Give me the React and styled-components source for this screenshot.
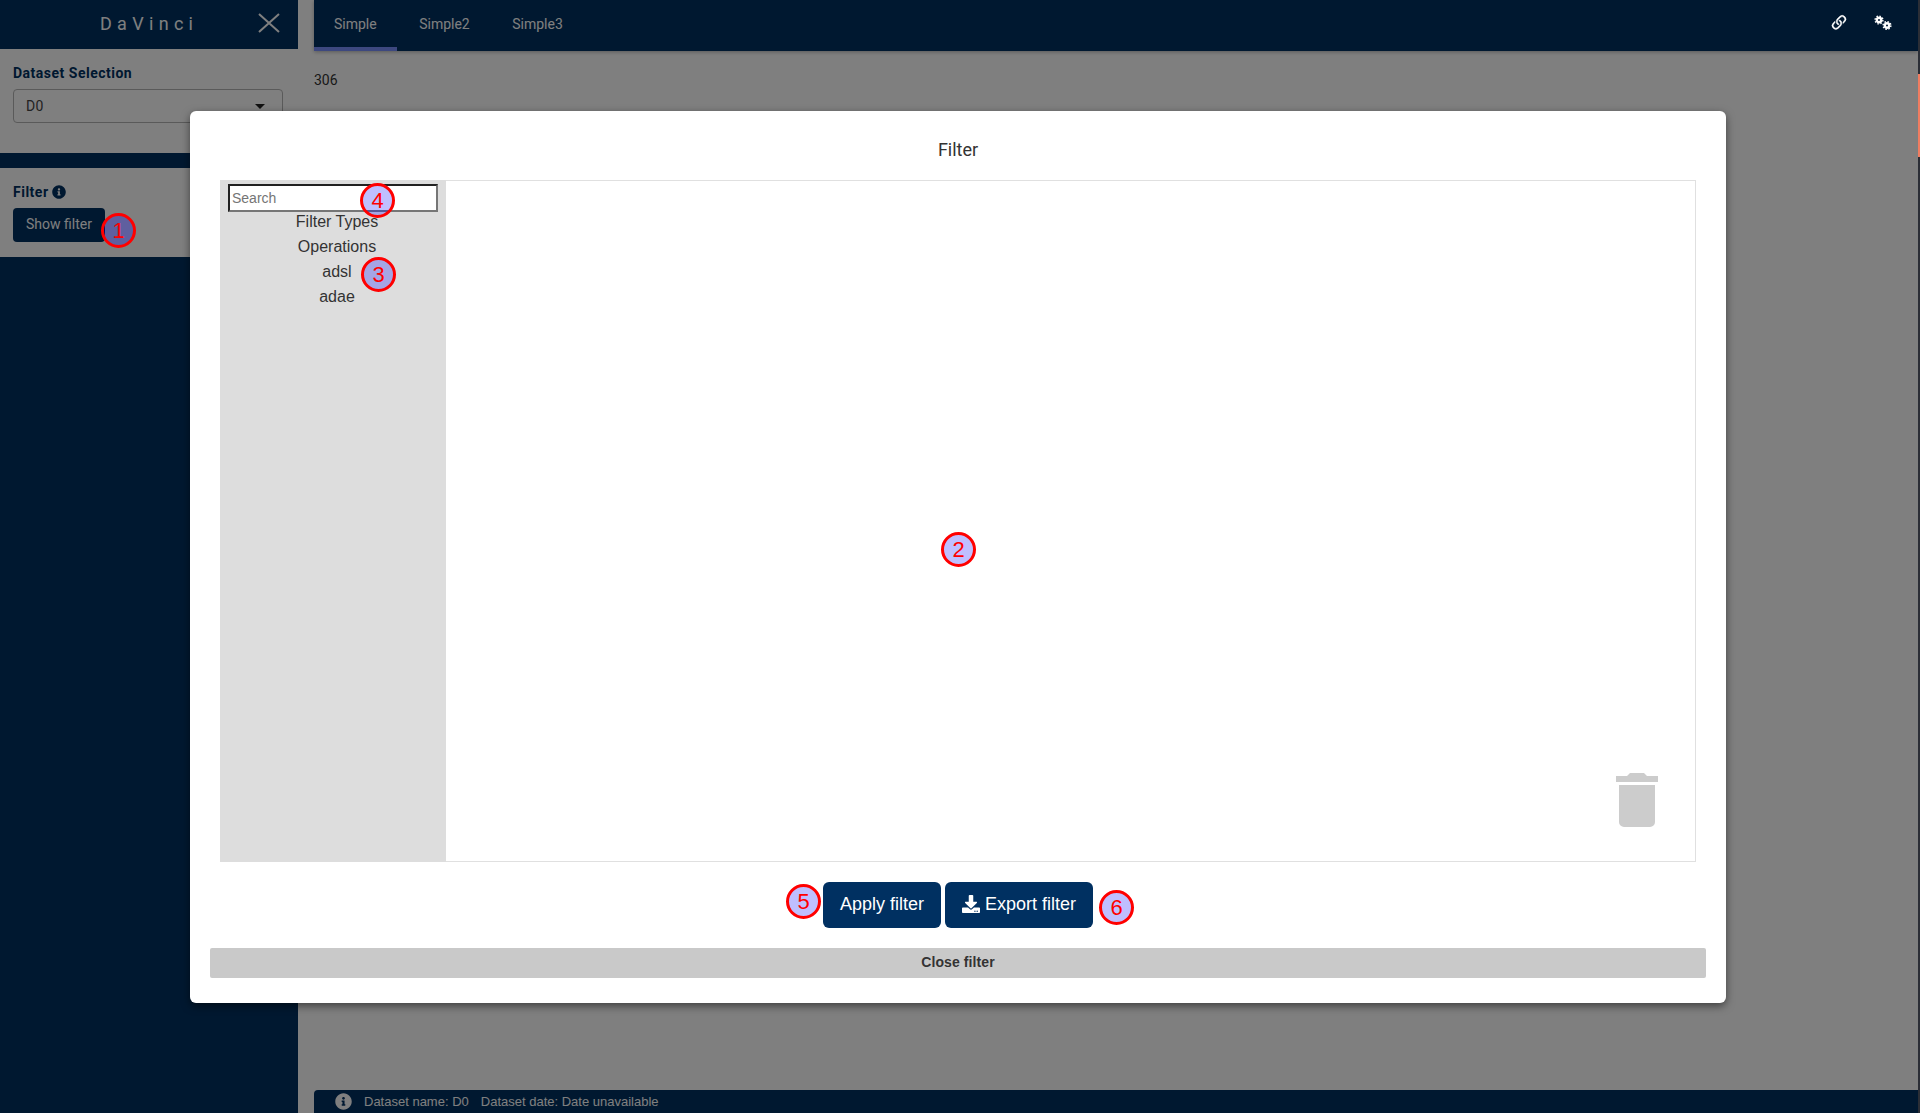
import React from "react";
import styled, { createGlobalStyle } from "styled-components";
import { FaDownload, FaInfoCircle } from "react-icons/fa";
import { BsLink45Deg } from "react-icons/bs";

const GlobalStyle = createGlobalStyle`
  html, body {
    margin: 0;
    padding: 0;
    height: 100%;
    overflow: hidden;
    background: #2b2e36;
    font-family: Roboto, "Liberation Sans", sans-serif;
  }
  * {
    box-sizing: border-box;
  }
`;

const Page = styled.div`
  display: flex;
  width: 1920px;
  height: 1113px;
`;

const Shell = styled.div`
  position: relative;
  display: flex;
  width: 1918px;
  height: 100%;
  background: #fff;
  overflow: hidden;
`;

const ScrollTrack = styled.div`
  width: 2px;
  height: 100%;
  padding-top: 74px;
  background: #2b2e36;
`;

const ScrollThumb = styled.div`
  height: 83px;
  background: #f07c60;
`;

const Sidebar = styled.aside`
  display: flex;
  flex-direction: column;
  width: 298px;
  background: #003061;
`;

const Brand = styled.div`
  display: flex;
  align-items: center;
  height: 49px;
  padding: 0 18px 3px 100px;
  justify-content: space-between;
  color: #fff;
  font-size: 18px;
  font-weight: 400;
  letter-spacing: 5.3px;
`;

const SideSection = styled.section`
  height: ${(props) => props.$height}px;
  margin-bottom: 15px;
  padding: ${(props) => props.$top}px 15px 0 13px;
  background: #fff;
`;

const SideLabel = styled.div`
  display: flex;
  align-items: center;
  gap: 3px;
  height: 16px;
  color: #003061;
  font-size: 14px;
  font-weight: 700;
  letter-spacing: 0.5px;

  svg {
    width: 14px;
    height: 14px;
  }
`;

const SelectBox = styled.div`
  display: flex;
  align-items: center;
  justify-content: space-between;
  height: 34px;
  margin-top: 8px;
  padding: 0 17px 0 12px;
  border: 1px solid #b5b5b5;
  border-radius: 4px;
  color: #444;
  font-size: 14px;
  letter-spacing: 0.4px;
`;

const Caret = styled.span`
  border-left: 5px solid transparent;
  border-right: 5px solid transparent;
  border-top: 5px solid #222;
`;

const SideButton = styled.div`
  display: flex;
  align-items: center;
  justify-content: center;
  width: 92px;
  height: 34px;
  margin-top: 8px;
  padding-bottom: 2px;
  border-radius: 4px;
  background: #003061;
  color: #fff;
  font-size: 14px;
`;

const Main = styled.main`
  position: relative;
  flex: 1;
  display: flex;
  flex-direction: column;
  padding-left: 16px;
`;

const TabBar = styled.nav`
  display: flex;
  align-items: stretch;
  gap: 2.5px;
  height: 51px;
  background: #003061;
  box-shadow: 0 1px 4px rgba(0, 0, 0, 0.3);
`;

const Tab = styled.div`
  display: flex;
  align-items: center;
  padding: 1px 20px 0;
  height: 51px;
  color: #fff;
  font-size: 14px;
  border-bottom: 4px solid ${(props) => (props.$active ? "#7a90ff" : "transparent")};
`;

// these two stay lit above the dimming overlay
const TabIcons = styled.div`
  position: relative;
  z-index: 2;
  display: flex;
  align-items: center;
  gap: 25px;
  margin-left: auto;
  padding: 0 26px 6px 0;
  color: #fff;

  svg path {
    stroke: currentColor;
    stroke-width: 0.35;
  }
`;

const Count = styled.p`
  flex: 1;
  margin: 21px 0 0;
  color: #333;
  font-size: 14px;
`;

const StatusBar = styled.footer`
  display: flex;
  align-items: center;
  height: 23px;
  padding-left: 21px;
  border-top-left-radius: 4px;
  background: #003061;
  color: #fff;
  font-size: 13px;
  font-family: "Liberation Sans", sans-serif;

  svg {
    width: 17px;
    height: 17px;
    margin-right: 12px;
  }

  span {
    margin-right: 12px;
  }
`;

const Overlay = styled.div`
  position: absolute;
  inset: 0;
  padding: 111px 0 0 190px;
  background: rgba(0, 0, 0, 0.5);
`;

const Modal = styled.div`
  display: flex;
  flex-direction: column;
  width: 1536px;
  height: 892px;
  padding: 0 20px;
  border-radius: 6px;
  background: #fff;
  box-shadow: 0 3px 9px rgba(0, 0, 0, 0.5);
  font-family: "Liberation Sans", sans-serif;
`;

const ModalTitle = styled.h2`
  display: flex;
  align-items: center;
  justify-content: center;
  height: 69px;
  margin: 0;
  padding-top: 7px;
  color: #333;
  font-size: 18px;
  font-weight: 400;
  font-family: Roboto, sans-serif;
`;

const Builder = styled.div`
  position: relative;
  display: flex;
  width: 1476px;
  height: 682px;
  margin-left: 10px;
  border: 1px solid #e0e0e0;
`;

const Toolbox = styled.div`
  display: flex;
  flex-direction: column;
  width: 226px;
  margin: -1px 0 -1px -1px;
  padding: 4px 8px 0;
  background: #ddd;
`;

const SearchInput = styled.input`
  width: 210px;
  height: 28px;
  margin-bottom: -3px;
  padding: 1px 2px;
  border: 2px inset #767676;
  background: #fff;
  font-family: "Liberation Sans", sans-serif;
  font-size: 14px;
`;

const ToolItem = styled.div`
  height: 25px;
  padding-left: 8px;
  color: #333;
  font-size: 16px;
  line-height: 25px;
  text-align: center;
`;

const TrashSpot = styled.div`
  position: absolute;
  right: 37px;
  bottom: 34px;
  line-height: 0;
`;

const Actions = styled.div`
  display: flex;
  justify-content: center;
  gap: 4px;
  margin-top: 20px;
`;

const ActionButton = styled.div`
  display: flex;
  align-items: center;
  justify-content: center;
  gap: 5px;
  width: ${(props) => props.$width}px;
  height: 46px;
  padding-bottom: 2px;
  border-radius: 6px;
  background: #003061;
  color: #fff;
  font-size: 18px;

  svg {
    font-size: 18px;
  }
`;

const CloseBar = styled.div`
  display: flex;
  align-items: center;
  justify-content: center;
  height: 30px;
  margin-top: 20px;
  padding-bottom: 2px;
  border-radius: 2px;
  background: #c9c9c9;
  color: #333;
  font-size: 14px;
  font-weight: 700;
  letter-spacing: 0.1px;
`;

const Marker = styled.div`
  position: absolute;
  left: ${(props) => props.$x - 17}px;
  top: ${(props) => props.$y - 17}px;
  display: flex;
  align-items: center;
  justify-content: center;
  width: 35px;
  height: 35px;
  border: 3px solid #f00;
  border-radius: 50%;
  background: rgba(0, 0, 255, 0.25);
  color: #f00;
  font-family: "Liberation Sans", sans-serif;
  font-size: 22px;
`;

const markers = [
  { id: 1, x: 118, y: 230 },
  { id: 2, x: 958, y: 549 },
  { id: 3, x: 378, y: 274 },
  { id: 4, x: 377, y: 200 },
  { id: 5, x: 803, y: 901 },
  { id: 6, x: 1116, y: 907 },
];

const toolItems = ["Filter Types", "Operations", "adsl", "adae"];

function CloseIcon() {
  return (
    <svg width="22" height="20" viewBox="0 0 22 20" fill="none" stroke="#fff" strokeWidth="2">
      <path d="M1 1l20 18M21 1L1 19" />
    </svg>
  );
}

function GearsIcon() {
  return (
    <svg width="18" height="16" viewBox="0 0 18 16" fill="none" stroke="#fff">
      <circle cx="5" cy="5" r="2.2" strokeWidth="2.4" />
      <circle cx="5" cy="5" r="3.9" strokeWidth="1.4" strokeDasharray="1.5 1.56" />
      <circle cx="13" cy="10.5" r="2.2" strokeWidth="2.4" />
      <circle cx="13" cy="10.5" r="3.9" strokeWidth="1.4" strokeDasharray="1.5 1.56" />
    </svg>
  );
}

function TrashIcon() {
  return (
    <svg width="42" height="54" viewBox="0 0 42 54" fill="#ccc">
      <path d="M11 3l3-3h14l3 3zM0 3h42v6H0zM3 12h36v37a5 5 0 0 1-5 5H8a5 5 0 0 1-5-5z" />
    </svg>
  );
}

export default function App() {
  return (
    <Page>
      <GlobalStyle />
      <Shell>
        <Sidebar>
          <Brand>
            DaVinci
            <CloseIcon />
          </Brand>
          <SideSection $height={104} $top={16}>
            <SideLabel>Dataset Selection</SideLabel>
            <SelectBox>
              D0
              <Caret />
            </SelectBox>
          </SideSection>
          <SideSection $height={89} $top={16}>
            <SideLabel>
              Filter <FaInfoCircle />
            </SideLabel>
            <SideButton>Show filter</SideButton>
          </SideSection>
        </Sidebar>
        <Main>
          <TabBar>
            <Tab $active>Simple</Tab>
            <Tab>Simple2</Tab>
            <Tab>Simple3</Tab>
            <TabIcons>
              <BsLink45Deg size={20} />
              <GearsIcon />
            </TabIcons>
          </TabBar>
          <Count>306</Count>
          <StatusBar>
            <FaInfoCircle />
            <span>Dataset name: D0</span>
            <span>Dataset date: Date unavailable</span>
          </StatusBar>
        </Main>
        <Overlay>
          <Modal>
            <ModalTitle>Filter</ModalTitle>
            <Builder>
              <Toolbox>
                <SearchInput placeholder="Search" />
                {toolItems.map((item) => (
                  <ToolItem key={item}>{item}</ToolItem>
                ))}
              </Toolbox>
              <TrashSpot>
                <TrashIcon />
              </TrashSpot>
            </Builder>
            <Actions>
              <ActionButton $width={118}>Apply filter</ActionButton>
              <ActionButton $width={148}>
                <FaDownload />
                Export filter
              </ActionButton>
            </Actions>
            <CloseBar>Close filter</CloseBar>
          </Modal>
        </Overlay>
        {markers.map((marker) => (
          <Marker key={marker.id} $x={marker.x} $y={marker.y}>
            {marker.id}
          </Marker>
        ))}
      </Shell>
      <ScrollTrack>
        <ScrollThumb />
      </ScrollTrack>
    </Page>
  );
}
